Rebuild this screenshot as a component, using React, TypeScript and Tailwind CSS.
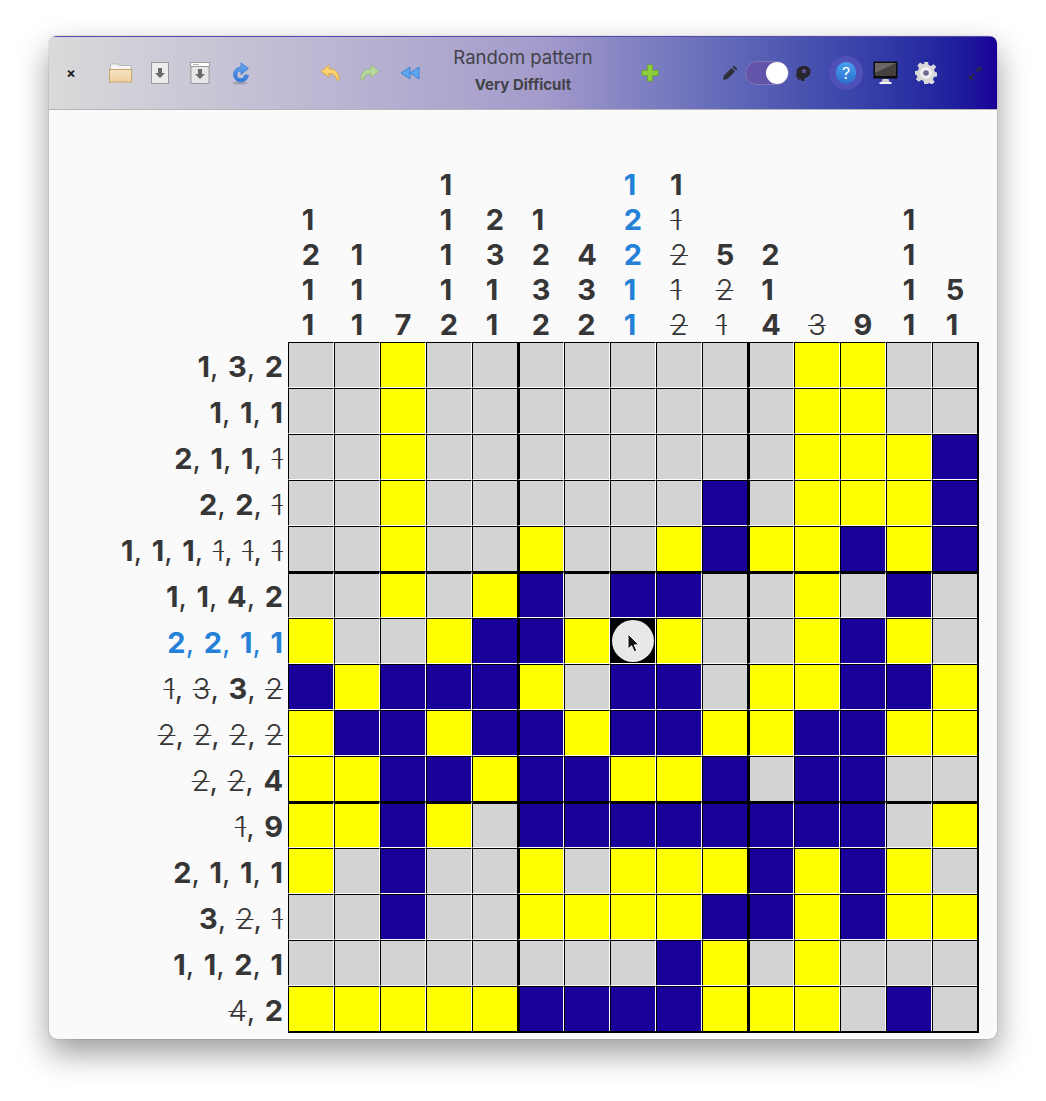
const grid = [
  'GGYGGGGGGGGYYGG',
  'GGYGGGGGGGGYYGG',
  'GGYGGGGGGGGYYYB',
  'GGYGGGGGGBGYYYB',
  'GGYGGYGGYBYYBYB',
  'GGYGYBGBBGGYGBG',
  'YGGYBBYKYGGYBYG',
  'BYBBBYGBBGYYBBY',
  'YBBYBBYBBYYBBYY',
  'YYBBYBBYYBGBBGG',
  'YYBYGBBBBBBBBGY',
  'YGBGGYGYYYBYBYG',
  'GGBGGYYYYBBYBYY',
  'GGGGGGGGBYGYGGG',
  'YYYYYBBBBYYYGBG',
];

type Clue = [string, boolean];
const d = (s: string): Clue => [s, false];
const x = (s: string): Clue => [s, true];

const colClues: Clue[][] = [
  [d('1'), d('2'), d('1'), d('1')],
  [d('1'), d('1'), d('1')],
  [d('7')],
  [d('1'), d('1'), d('1'), d('1'), d('2')],
  [d('2'), d('3'), d('1'), d('1')],
  [d('1'), d('2'), d('3'), d('2')],
  [d('4'), d('3'), d('2')],
  [d('1'), d('2'), d('2'), d('1'), d('1')],
  [d('1'), x('1'), x('2'), x('1'), x('2')],
  [d('5'), x('2'), x('1')],
  [d('2'), d('1'), d('4')],
  [x('3')],
  [d('9')],
  [d('1'), d('1'), d('1'), d('1')],
  [d('5'), d('1')],
];

const rowClues: Clue[][] = [
  [d('1'), d('3'), d('2')],
  [d('1'), d('1'), d('1')],
  [d('2'), d('1'), d('1'), x('1')],
  [d('2'), d('2'), x('1')],
  [d('1'), d('1'), d('1'), x('1'), x('1'), x('1')],
  [d('1'), d('1'), d('4'), d('2')],
  [d('2'), d('2'), d('1'), d('1')],
  [x('1'), x('3'), d('3'), x('2')],
  [x('2'), x('2'), x('2'), x('2')],
  [x('2'), x('2'), d('4')],
  [x('1'), d('9')],
  [d('2'), d('1'), d('1'), d('1')],
  [d('3'), x('2'), x('1')],
  [d('1'), d('1'), d('2'), d('1')],
  [x('4'), d('2')],
];

function Num({ clue }: { clue: Clue }) {
  return clue[1] ? <span className="font-light line-through decoration-1">{clue[0]}</span> : <span className="font-bold">{clue[0]}</span>;
}

function CellBox({ kind, r, c }: { kind: string; r: number; c: number }) {
  const color = kind === 'Y' ? 'bg-[#ffff00]' : kind === 'B' ? 'bg-[#180099]' : kind === 'K' ? 'bg-black' : 'bg-[#d3d3d3]';
  const thickL = c > 0 && c % 5 === 0;
  const thickT = r > 0 && r % 5 === 0;
  const lastC = c === 14;
  const lastR = r === 14;
  return (
    <div
      className={`relative shrink-0 ${color} ${thickL ? '-ml-[1px] w-[47px] border-l-[3px]' : 'w-[46px] border-l'} ${thickT ? '-mt-[1px] h-[47px] border-t-[3px]' : 'h-[46px] border-t'} border-l-black border-t-black ${lastC ? 'max-w-[45px] border-r-0' : 'border-r border-r-white'} ${lastR ? 'max-h-[45px] border-b-0' : 'border-b border-b-white'}`}
    >
      {kind === 'K' && (
        <div className="absolute left-[1px] top-[1px] flex h-[42px] w-[42px] items-center justify-center rounded-full bg-[#e8e8e8]">
          <svg width="16" height="22" viewBox="0 0 16 22" className="translate-x-[1px] translate-y-[3px]">
            <path d="M2 1v15l3.600-3.200 2.600 6 2.600-1.100-2.600-5.800H13z" fill="#111" stroke="#fff" strokeWidth="1" />
          </svg>
        </div>
      )}
    </div>
  );
}

function Folder() {
  return (
    <svg width="23" height="20" viewBox="0 0 23 20">
      <defs>
        <linearGradient id="fold" x1="0" y1="0" x2="0" y2="1">
          <stop offset="0" stopColor="#f6e3c4" />
          <stop offset="1" stopColor="#efcf9f" />
        </linearGradient>
      </defs>
      <path d="M1.500 7V2a1 1 0 0 1 1-1h6l1.500 1.500h11a1 1 0 0 1 1 1V7z" fill="#f7f7f7" stroke="#b7b7b7" />
      <rect x="0.500" y="6.500" width="22" height="12.500" fill="url(#fold)" stroke="#c9a76b" />
    </svg>
  );
}

function SaveIcon() {
  return (
    <svg width="18" height="22" viewBox="0 0 18 22">
      <rect x="0.500" y="0.500" width="17" height="21" fill="#ececec" stroke="#9a9a9a" />
      <path d="M7 6h4v5h3L9 16 4 11h3z" fill="#6a6a6a" />
    </svg>
  );
}

function SaveAsIcon() {
  return (
    <svg width="20" height="22" viewBox="0 0 20 22">
      <rect x="1" y="1" width="18" height="20.500" fill="#e6e6e6" stroke="#9a9a9a" />
      <rect x="0.500" y="0.500" width="19" height="4" fill="#fff" stroke="#9a9a9a" />
      <path d="M3 2.500h6" stroke="#b5b5b5" />
      <path d="M8 7h4v5h3l-5 5-5-5h3z" fill="#6a6a6a" />
    </svg>
  );
}

function Refresh() {
  return (
    <svg width="20" height="23" viewBox="0 0 20 23">
      <defs>
        <linearGradient id="ref" x1="0" y1="0" x2="0" y2="1">
          <stop offset="0" stopColor="#6ba8ee" />
          <stop offset="1" stopColor="#2f78dc" />
        </linearGradient>
      </defs>
      <ellipse cx="10" cy="21" rx="7.500" ry="1.600" fill="#000" opacity="0.16" />
      <path d="M11 5A7.500 7.500 0 1 0 18.500 13h-4a3.800 3.800 0 1 1-3.500-4V12.500l7.500-6L11 .8z" fill="url(#ref)" stroke="#3a77cf" strokeWidth="0.700" />
    </svg>
  );
}

function Undo({ fill, stroke, flip }: { fill: string; stroke: string; flip?: boolean }) {
  return (
    <svg width="20" height="18" viewBox="0 0 20 18" className={flip ? '-scale-x-100' : ''}>
      <path d="M9 1 1 7.500 9 13V9.500c4 0 7 1.500 7.500 6.500H19c0-7-3-11-10-11z" fill={fill} stroke={stroke} />
    </svg>
  );
}

function Rewind() {
  return (
    <svg width="20" height="14" viewBox="0 0 20 14">
      <path d="M10 1v12L1 7z" fill="#5ea5ee" stroke="#3f84d8" />
      <path d="M19 1v12l-9-6z" fill="#5ea5ee" stroke="#3f84d8" />
    </svg>
  );
}

function Plus() {
  return (
    <svg width="18" height="18" viewBox="0 0 18 18">
      <path d="M6.500 1h5v5.500H17v5h-5.500V17h-5v-5.500H1v-5h5.500z" fill="#8ccf3c" stroke="#6da82c" />
    </svg>
  );
}

function Pencil() {
  return (
    <svg width="16" height="16" viewBox="0 0 16 16">
      <path d="M1 15l1-4.500L9.500 3l3.500 3.500L5.500 14z M10.500 2l1.500-1.500 3.500 3.500L14 5.500z" fill="#2f2f35" />
    </svg>
  );
}

function Brain() {
  return (
    <svg width="16" height="16" viewBox="0 0 16 16">
      <path d="M8.500 1C4.500 1 1.500 3.500 1.500 7c0 1.500.5 2.500-1 4.500l2 .5v2.500h4V16h3v-3c3.500-.5 6-3 6-6.500C15.500 3 12.500 1 8.500 1z" fill="#26262c" />
      <path d="M9 3l.9 2 2.100.2-1.600 1.400.5 2.100L9 7.600 7.100 8.700l.5-2.100L6 5.200 8.100 5z" fill="#6a55a8" />
    </svg>
  );
}

function Monitor() {
  return (
    <svg width="25" height="24" viewBox="0 0 25 24">
      <rect x="0.500" y="0.500" width="24" height="17" fill="#0c0c0c" />
      <rect x="2" y="2" width="21" height="13" fill="#46403f" />
      <path d="M2 2h21L2 12z" fill="#6d6668" />
      <path d="M9.500 18h6l1 3h-8z" fill="#cfcfcf" />
      <rect x="6.500" y="21" width="12" height="2" fill="#f4f4f4" />
    </svg>
  );
}

function Gear() {
  return (
    <svg width="22" height="22" viewBox="0 0 22 22">
      <path d="M9 0h4l.6 3 2.400 1 2.600-1.700 2.800 2.800L19 7.600l1 2.400 2 .6v3.800l-3 .6-1 2.400 1.700 2.600-2.800 2.800-2.600-1.700-2.400 1L12.800 22H9.200l-.6-3-2.400-1-2.600 1.700-2.800-2.800L2.500 15.300l-1-2.400L0 12.400V9l3-.6 1-2.400L2.300 3.400 5.100.6 7.700 2.300 9.400 1.500z" fill="#d8d8d8" />
      <circle cx="11" cy="11" r="6" fill="#efefef" />
      <circle cx="11" cy="11" r="2.800" fill="#6f6a94" />
    </svg>
  );
}

function Expand() {
  return (
    <svg width="14" height="14" viewBox="0 0 14 14">
      <path d="M8 6l4-4" stroke="#2a2a48" strokeWidth="2" fill="none" />
      <path d="M8.500 1H13.500V6z" fill="#2a2a48" />
      <path d="M6 8l-4 4" stroke="#2a2a48" strokeWidth="2" fill="none" />
      <path d="M1 8.500V13.500H6z" fill="#2a2a48" />
    </svg>
  );
}

export default function App() {
  return (
    <div className="h-[1101px] w-[1046px] overflow-hidden bg-white pl-[49px] pt-[36px] font-['Inter',sans-serif]">
      <div className="h-[1003px] w-[948px] overflow-hidden rounded-[8px] bg-[#fafafa] shadow-[0_0_1px_rgba(0,0,0,0.6),0_14px_32px_rgba(0,0,0,0.4)]">
        <header className="flex h-[74px] items-center border-t border-b border-t-[#5a49ad] border-b-[#b5b5b8] bg-gradient-to-r from-[#dadada] via-[#a49bcb] via-52% to-[#190097]">
          <div className="ml-[17px] flex w-[10px] shrink-0 justify-center text-[14px] font-bold leading-none text-[#222]">×</div>
          <div className="ml-[32px] flex w-[24px] shrink-0 justify-center"><Folder /></div>
          <div className="ml-[18px] flex w-[20px] shrink-0 justify-center"><SaveIcon /></div>
          <div className="ml-[19px] flex w-[22px] shrink-0 justify-center"><SaveAsIcon /></div>
          <div className="ml-[18px] flex w-[22px] shrink-0 justify-center"><Refresh /></div>
          <div className="ml-[69px] w-[20px] shrink-0"><Undo fill="#fcd36e" stroke="#d9a94b" /></div>
          <div className="ml-[20px] w-[20px] shrink-0"><Undo fill="#b7d99a" stroke="#97bd7e" flip /></div>
          <div className="ml-[20px] w-[20px] shrink-0"><Rewind /></div>
          <div className="ml-[23px] flex w-[160px] shrink-0 flex-col items-center pb-[6px] text-[#424248]">
            <div className="text-[18.500px] leading-[22px]">Random pattern</div>
            <div className="mt-[8px] text-[15px] font-bold leading-[18px]">Very Difficult</div>
          </div>
          <div className="ml-[38px] w-[18px] shrink-0"><Plus /></div>
          <div className="ml-[63px] w-[16px] shrink-0"><Pencil /></div>
          <div className="ml-[7px] flex h-[24px] w-[44px] shrink-0 items-center justify-end rounded-full border border-[#8078b4] bg-[#6354aa]">
            <div className="h-[22px] w-[22px] rounded-full bg-white" />
          </div>
          <div className="ml-[6px] w-[16px] shrink-0"><Brain /></div>
          <div className="ml-[18px] flex h-[34px] w-[34px] shrink-0 items-center justify-center rounded-full bg-[#4f50b8]">
            <div className="flex h-[22px] w-[20px] items-center justify-center rounded-full bg-gradient-to-b from-[#4aa0ee] to-[#2a6fd0] text-[16px] leading-none text-white">?</div>
          </div>
          <div className="ml-[10px] w-[25px] shrink-0"><Monitor /></div>
          <div className="ml-[17px] w-[22px] shrink-0"><Gear /></div>
          <div className="ml-[31px] w-[14px] shrink-0"><Expand /></div>
        </header>

        <div className="flex pl-[239px]">
          <div className="flex h-[232px] items-end">
            {colClues.map((clue, i) => (
              <div key={i} className="flex w-[46px] shrink-0 justify-center">
                <div className={`flex flex-col items-start text-[29px] leading-[35px] ${i === 7 ? 'text-[#2481d7]' : 'text-[#363636]'}`}>
                  {clue.map((n, j) => (
                    <Num key={j} clue={n} />
                  ))}
                </div>
              </div>
            ))}
          </div>
        </div>

        <div className="flex">
          <div className="w-[234px] shrink-0 text-right">
            {rowClues.map((clue, i) => (
              <div key={i} className={`h-[46px] whitespace-nowrap text-[29px] leading-[50px] [word-spacing:1.500px] ${i === 6 ? 'text-[#2481d7]' : 'text-[#363636]'}`}>
                {clue.map((n, j) => (
                  <span key={j}>
                    {j > 0 && <span className="font-normal">, </span>}
                    <Num clue={n} />
                  </span>
                ))}
              </div>
            ))}
          </div>
          <div className="ml-[5px] w-[691px] border-r-[2px] border-b-[2px] border-black">
            {grid.map((row, r) => (
              <div key={r} className="flex">
                {row.split('').map((k, c) => (
                  <CellBox key={c} kind={k} r={r} c={c} />
                ))}
              </div>
            ))}
          </div>
        </div>
      </div>
    </div>
  );
}
